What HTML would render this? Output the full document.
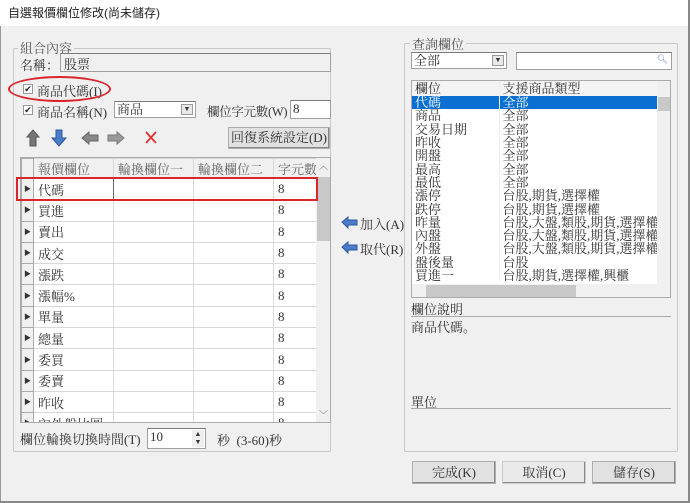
<!DOCTYPE html>
<html><head><meta charset="utf-8"><style>
*{box-sizing:border-box;margin:0;padding:0}
body{width:690px;height:503px;background:#f0f0f0;font-family:"Liberation Serif","Noto Serif CJK SC","Noto Sans CJK TC",serif;font-size:13px;color:#333;position:relative;overflow:hidden}
.a{position:absolute;white-space:nowrap}
.box{position:absolute;border:1px solid #c8c8c8;border-radius:2px}
.inp{position:absolute;background:#fff;border:1px solid #a0a0a0;border-top-color:#7a7a7a}
.btn{position:absolute;background:#e1e1e1;border:1px solid #adadad;box-shadow:inset -1px -1px 0 #888;text-align:center}
.cb{position:absolute;width:10px;height:10px;font-size:9px;line-height:8px;color:#222;border:1px solid #999;background:#fff;text-align:center}
table{border-collapse:collapse;table-layout:fixed}
.g td{border:1px solid #d8d8d8;height:21.3px;padding-left:4px;font-size:13px;background:#fff;overflow:hidden}
.g td.h{background:#f0f0f0;padding:0;text-align:center;font-size:7px;border-color:#aaa}
.g tr.hd td{background:#f0f0f0;color:#666;height:19px}
.l td{height:13.3px;line-height:13px;padding-left:3px;font-size:13px;overflow:hidden;border-right:1px solid #eee}
</style></head><body>
<div class="a" style="left:0;top:0;width:690px;height:26px;background:#fff"></div>
<div class="a" style="left:8px;top:4px;font-family:'Liberation Sans','Noto Sans CJK TC',sans-serif;font-size:12px;color:#222">自選報價欄位修改(尚未儲存)</div>
<div class="a" style="left:0;top:26px;width:1px;height:477px;background:#999"></div>
<div class="a" style="left:688px;top:0;width:2px;height:503px;background:#888"></div>
<div class="a" style="left:0;top:501px;width:690px;height:2px;background:#888"></div>

<div class="box" style="left:13px;top:48px;width:318px;height:404px"></div>
<div class="a" style="left:18px;top:38px;background:#f0f0f0;padding:0 2px;color:#555">組合內容</div>
<div class="a" style="left:20px;top:55px">名稱：</div>
<div class="inp" style="left:60px;top:53px;width:271px;height:19px;background:#f0f0f0;padding-left:3px">股票</div>
<div class="cb" style="left:23px;top:84px">✔</div>
<div class="a" style="left:37px;top:81px">商品代碼(I)</div>
<div class="a" style="left:8px;top:76px;width:103px;height:26px;border:2px solid #d9262c;border-radius:50%"></div>
<div class="cb" style="left:23px;top:105px">✔</div>
<div class="a" style="left:37px;top:102px">商品名稱(N)</div>
<div class="inp" style="left:114px;top:101px;width:82px;height:17px;padding-left:2px;line-height:15px">商品<span style="position:absolute;right:2px;top:2px;width:12px;height:11px;background:#e8e8e8;border:1px solid #999;font-size:7px;text-align:center;line-height:9px">▼</span></div>
<div class="a" style="left:207px;top:102px;font-size:12.5px;letter-spacing:-0.3px">欄位字元數(W)</div>
<div class="inp" style="left:290px;top:100px;width:41px;height:19px;padding-left:2px">8</div>
<svg class="a" style="left:22px;top:127px" width="150" height="22">
<path d="M5 10 L11 3 L17 10 L14 10 L14 19 L8 19 L8 10Z" fill="#777" stroke="#555"/>
<path d="M34 3 L40 3 L40 11 L44 11 L37 19 L30 11 L34 11Z" fill="#4a7cc9" stroke="#2d5aa0"/>
<path d="M60 11 L67 5 L67 8 L76 8 L76 14 L67 14 L67 17Z" fill="#888" stroke="#666"/>
<path d="M102 11 L95 5 L95 8 L86 8 L86 14 L95 14 L95 17Z" fill="#999" stroke="#777"/>
<path d="M124 5 L134 16 M134 5 L124 16" stroke="#e03030" stroke-width="1.8"/>
</svg>
<div class="btn" style="left:228px;top:127px;width:102px;height:22px;line-height:20px">回復系統設定(D)</div>

<div class="a" style="left:20px;top:157px;width:311px;height:266px;background:#fff;border:1px solid #aaa;overflow:hidden">
<table class="g" style="width:296px">
<col style="width:12px"><col style="width:80px"><col style="width:80px"><col style="width:80px"><col style="width:44px">
<tr class="hd"><td class="h"></td><td>報價欄位</td><td>輪換欄位一</td><td>輪換欄位二</td><td>字元數</td></tr>
<tr><td class="h">▶</td><td style="border:1px solid #666">代碼</td><td></td><td></td><td>8</td></tr>
<tr><td class="h">▶</td><td>買進</td><td></td><td></td><td>8</td></tr>
<tr><td class="h">▶</td><td>賣出</td><td></td><td></td><td>8</td></tr>
<tr><td class="h">▶</td><td>成交</td><td></td><td></td><td>8</td></tr>
<tr><td class="h">▶</td><td>漲跌</td><td></td><td></td><td>8</td></tr>
<tr><td class="h">▶</td><td>漲幅%</td><td></td><td></td><td>8</td></tr>
<tr><td class="h">▶</td><td>單量</td><td></td><td></td><td>8</td></tr>
<tr><td class="h">▶</td><td>總量</td><td></td><td></td><td>8</td></tr>
<tr><td class="h">▶</td><td>委買</td><td></td><td></td><td>8</td></tr>
<tr><td class="h">▶</td><td>委賣</td><td></td><td></td><td>8</td></tr>
<tr><td class="h">▶</td><td>昨收</td><td></td><td></td><td>8</td></tr>
<tr><td class="h">▶</td><td>內外盤比圖</td><td></td><td></td><td>8</td></tr>
</table>
<div class="a" style="left:295px;top:0;width:15px;height:265px;background:#f0f0f0"></div>
<div class="a" style="left:296px;top:19px;width:13px;height:64px;background:#c8c8c8"></div>
<div class="a" style="left:298px;top:1px;font-size:9px;color:#555">︿</div>
<div class="a" style="left:298px;top:250px;font-size:9px;color:#555">﹀</div>
</div>
<div class="a" style="left:16px;top:177px;width:302px;height:24px;border:2px solid #d9262c"></div>

<div class="a" style="left:20px;top:429px">欄位輪換切換時間(T)</div>
<div class="inp" style="left:147px;top:428px;width:59px;height:21px;padding-left:2px">10<span style="position:absolute;right:1px;top:1px;width:12px;height:17px;background:#eee;font-size:7px;line-height:8px;text-align:center">▲<br>▼</span></div>
<div class="a" style="left:217px;top:430px">秒&nbsp; (3-60)秒</div>

<svg class="a" style="left:341px;top:216px" width="18" height="44"><path d="M1 6 L7 1 L7 4 L16 4 L16 9 L7 9 L7 12Z" fill="#4a7cc9" stroke="#2d5aa0"/><path d="M1 31 L7 26 L7 29 L16 29 L16 34 L7 34 L7 37Z" fill="#4a7cc9" stroke="#2d5aa0"/></svg>
<div class="a" style="left:360px;top:214px">加入(A)</div>
<div class="a" style="left:360px;top:239px">取代(R)</div>

<div class="box" style="left:404px;top:43px;width:274px;height:409px"></div>
<div class="a" style="left:410px;top:34px;background:#f0f0f0;padding:0 2px;color:#555">查詢欄位</div>
<div class="inp" style="left:411px;top:52px;width:96px;height:17px;padding-left:2px;line-height:15px">全部<span style="position:absolute;right:2px;top:2px;width:12px;height:11px;background:#e8e8e8;border:1px solid #999;font-size:7px;text-align:center;line-height:9px">▼</span></div>
<div class="inp" style="left:516px;top:52px;width:156px;height:18px"><span style="position:absolute;right:3px;top:1px;font-size:9px;color:#6a8cc0">🔍︎</span></div>
<div class="a" style="left:411px;top:80px;width:260px;height:218px;background:#fff;border:1px solid #aaa;overflow:hidden">
<table class="l" style="width:245px">
<col style="width:87px"><col style="width:158px">
<tr style="background:#f4f4f4"><td style="height:15px">欄位</td><td>支援商品類型</td></tr>
<tr style="background:#0a6fd1;color:#fff"><td>代碼</td><td>全部</td></tr>
<tr><td>商品</td><td>全部</td></tr>
<tr><td>交易日期</td><td>全部</td></tr>
<tr><td>昨收</td><td>全部</td></tr>
<tr><td>開盤</td><td>全部</td></tr>
<tr><td>最高</td><td>全部</td></tr>
<tr><td>最低</td><td>全部</td></tr>
<tr><td>漲停</td><td>台股,期貨,選擇權</td></tr>
<tr><td>跌停</td><td>台股,期貨,選擇權</td></tr>
<tr><td>昨量</td><td>台股,大盤,類股,期貨,選擇權,興</td></tr>
<tr><td>內盤</td><td>台股,大盤,類股,期貨,選擇權,興</td></tr>
<tr><td>外盤</td><td>台股,大盤,類股,期貨,選擇權,興</td></tr>
<tr><td>盤後量</td><td>台股</td></tr>
<tr><td>買進一</td><td>台股,期貨,選擇權,興櫃</td></tr>
</table>
<div class="a" style="left:245px;top:0;width:14px;height:216px;background:#f0f0f0"></div>
<div class="a" style="left:246px;top:16px;width:12px;height:14px;background:#c8c8c8"></div>
<div class="a" style="left:0;top:203px;width:245px;height:14px;background:#f0f0f0"></div>
<div class="a" style="left:14px;top:204px;width:150px;height:12px;background:#c8c8c8"></div>
</div>
<div class="a" style="left:411px;top:299px">欄位說明</div>
<div class="a" style="left:411px;top:316px;width:260px;height:1px;background:#aaa"></div>
<div class="a" style="left:411px;top:317px">商品代碼。</div>
<div class="a" style="left:411px;top:392px">單位</div>
<div class="a" style="left:411px;top:408px;width:260px;height:1px;background:#aaa"></div>

<div class="btn" style="left:412px;top:461px;width:84px;height:23px;line-height:21px">完成(K)</div>
<div class="btn" style="left:502px;top:461px;width:84px;height:23px;line-height:21px;background:#eaeaea;border-color:#ccc">取消(C)</div>
<div class="btn" style="left:592px;top:461px;width:84px;height:23px;line-height:21px">儲存(S)</div>
</body></html>
